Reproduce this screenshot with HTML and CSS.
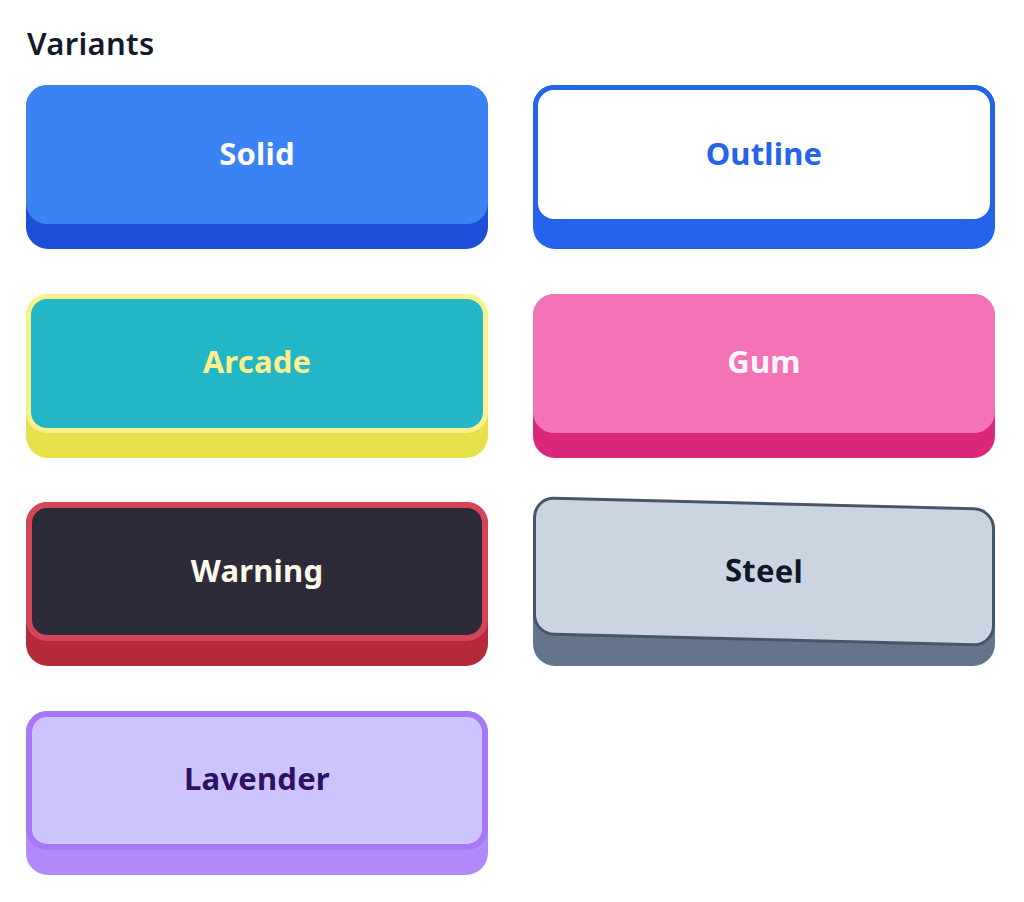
FILE: index.html
```html
<!DOCTYPE html>
<html lang="en">
<head>
<meta charset="utf-8">
<title>Variants</title>
<link rel="stylesheet" href="styles.css">
</head>
<body>
<section class="page">
  <h2 class="title">Variants</h2>
  <div class="grid">
    <button class="btn solid"><span class="face">Solid</span></button>
    <button class="btn outline"><span class="face">Outline</span></button>
    <button class="btn arcade"><span class="face">Arcade</span></button>
    <button class="btn gum"><span class="face">Gum</span></button>
    <button class="btn warning"><span class="face">Warning</span></button>
    <button class="btn steel"><span class="face">Steel</span></button>
    <button class="btn lavender"><span class="face">Lavender</span></button>
  </div>
</section>
</body>
</html>
```

FILE: styles.css
```css
* { box-sizing: border-box; }
html, body { margin: 0; padding: 0; background: #ffffff; }
body { font-family: "Noto Sans", "Open Sans", sans-serif; }

.page { padding: 23px 29px 0 26px; }

.title {
  margin: 0 0 22px 1px;
  font-size: 31px;
  font-weight: 600;
  line-height: 40px;
  letter-spacing: 0.3px;
  color: #141a2a;
}

.grid {
  display: grid;
  grid-template-columns: 462px 462px;
  column-gap: 45px;
  row-gap: 44.5px;
}

.btn {
  display: block;
  width: 462px;
  height: 164px;
  padding: 0 0 25px 0;
  border: 0;
  border-radius: 22px;
  font-family: inherit;
  cursor: pointer;
}

.face {
  display: flex;
  align-items: center;
  justify-content: center;
  width: 100%;
  height: 139px;
  padding-bottom: 4px;
  border-radius: 21px;
  font-size: 31px;
  font-weight: 700;
  letter-spacing: 0.2px;
}

.solid { background: #1e4fd8; }
.solid .face { background: #3b82f4; color: #ffffff; }

.outline { background: #2563eb; }
.outline .face { background: #ffffff; border: 5px solid #2563eb; color: #2563eb; }

.arcade { background: #e6e04b; }
.arcade .face { background: #22b6c7; border: 5px solid #f9f18b; color: #fbf08b; }

.gum { background: #db2777; }
.gum .face { background: #f373b4; color: #fff7fb; }

.warning { background: #b42a3a; }
.warning .face { background: #2d2b39; border: 6px solid #d6445a; color: #fdf8ea; }

.steel { background: linear-gradient(to bottom, transparent 24px, #64748b 24px); }
.steel .face {
  background: #cbd5e1;
  border: 3px solid #475569;
  color: #0f172a;
  transform: skewY(1.4deg);
}

.lavender { background: #b08afa; }
.lavender .face { background: #cec4fd; border: 6px solid #a677f7; color: #2e1065; }
```
